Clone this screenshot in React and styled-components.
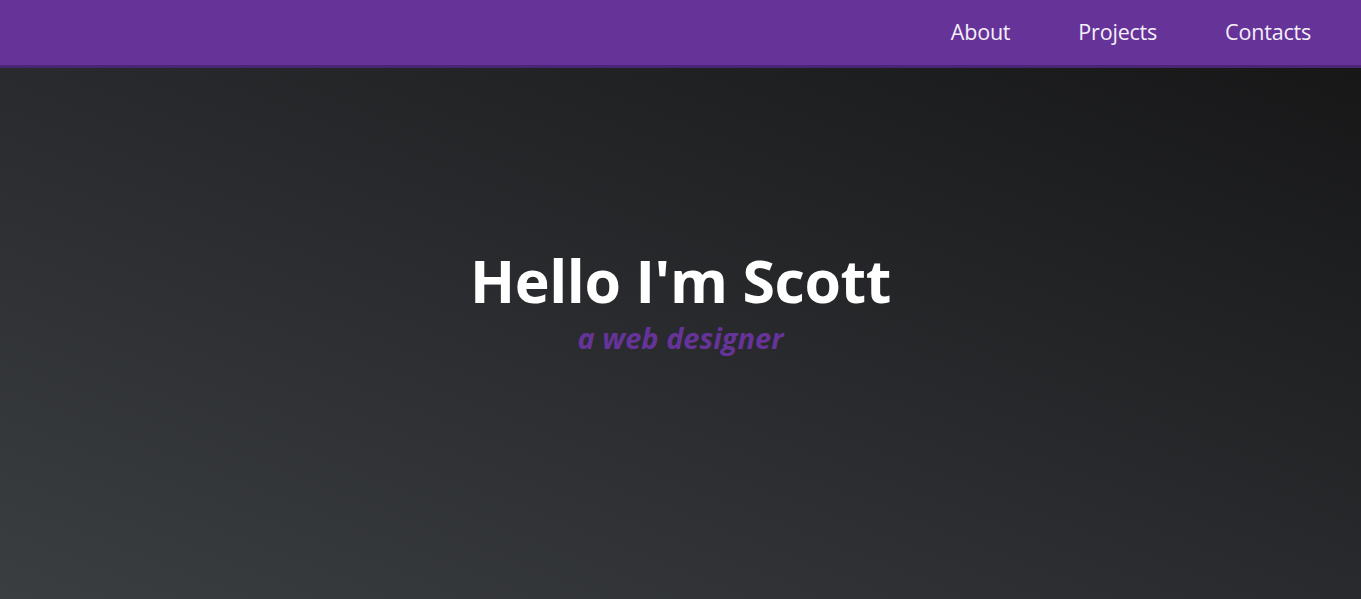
import React from 'react';
import styled, { createGlobalStyle } from 'styled-components';

const GlobalStyle = createGlobalStyle`
  * {
    box-sizing: border-box;
  }
  body {
    margin: 0;
    font-family: "Open Sans", "Noto Sans", sans-serif;
    background: #222325;
  }
`;

const Page = styled.div`
  display: flex;
  flex-direction: column;
  height: 100vh;
  overflow: hidden;
`;

const Header = styled.header`
  display: flex;
  justify-content: flex-end;
  align-items: center;
  height: 68px;
  padding: 0 50px 2px 0;
  background: #663399;
  border-bottom: 3px solid #4b2575;
`;

const Nav = styled.nav`
  display: flex;
  gap: 68px;
`;

const NavLink = styled.a`
  color: #f4f0f8;
  font-size: 21.5px;
  text-decoration: none;
  letter-spacing: -0.2px;
`;

const Hero = styled.main`
  flex: 1;
  display: flex;
  flex-direction: column;
  align-items: center;
  justify-content: center;
  padding-bottom: 64px;
  background: linear-gradient(to top right, #3b3e41 0%, #2a2c2f 45%, #171718 100%);
`;

const Title = styled.h1`
  margin: 0;
  color: #ffffff;
  font-size: 59px;
  font-weight: 700;
  line-height: 1.15;
  letter-spacing: -0.4px;
`;

const Subtitle = styled.h2`
  margin: 6px 0 0;
  color: #663399;
  font-size: 29px;
  font-weight: 700;
  font-style: italic;
  line-height: 1.2;
`;

const links = ['About', 'Projects', 'Contacts'];

export default function App() {
  return (
    <Page>
      <GlobalStyle />
      <Header>
        <Nav>
          {links.map((l) => (
            <NavLink key={l} href={`#${l.toLowerCase()}`}>{l}</NavLink>
          ))}
        </Nav>
      </Header>
      <Hero>
        <Title>Hello I'm Scott</Title>
        <Subtitle>a web designer</Subtitle>
      </Hero>
    </Page>
  );
}
